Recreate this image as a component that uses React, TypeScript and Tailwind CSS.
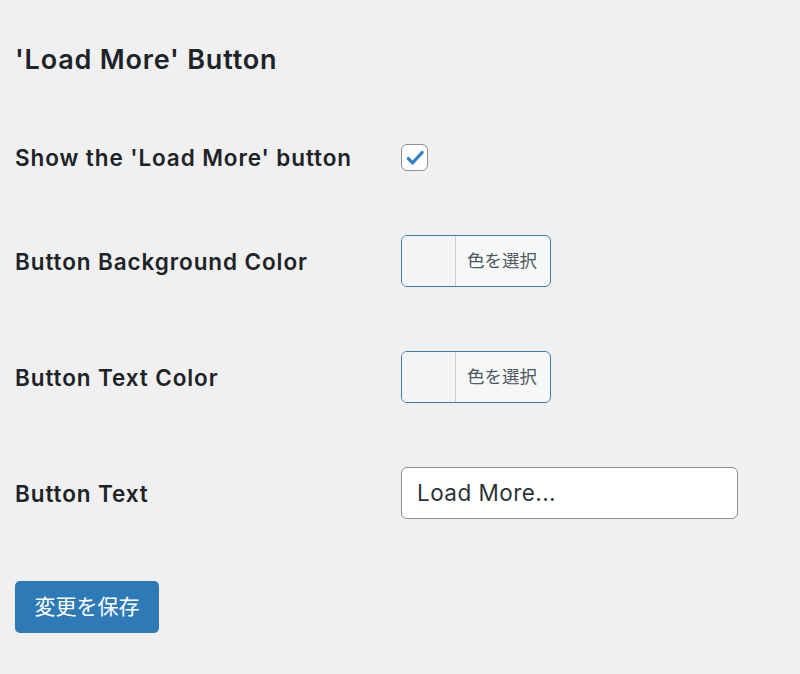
import React from 'react';

const font = { fontFamily: 'Inter, "Noto Sans CJK JP", sans-serif' };

function ColorPicker() {
    return (
        <button
            type="button"
            className="flex h-[52px] w-[150px] overflow-hidden rounded-[6px] border-[1.5px] border-[#3a7cb3] bg-[#f6f7f7]"
        >
            <span className="h-full w-[54px] border-r-[1.5px] border-[#c9cbce] bg-[#f3f4f6]" />
            <span className="flex flex-1 items-center pl-[11px] text-[17.5px] text-[#50575e]">色を選択</span>
        </button>
    );
}

function Row({ label, tall = true, children }: { label: string; tall?: boolean; children: React.ReactNode }) {
    return (
        <div className={tall ? 'flex h-[52px] items-center' : 'flex h-[27px] items-center'}>
            <div className="w-[386px] text-[22.5px] font-semibold leading-[27px] tracking-[0.04em] text-[#1d2327]">{label}</div>
            {children}
        </div>
    );
}

export default function App() {
    return (
        <div className="min-h-[674px] bg-[#f0f0f1] pl-[15px] pt-[44px]" style={font}>
            <h2 className="text-[27px] font-semibold leading-[32px] tracking-[0.03em] text-[#1d2327]">'Load More' Button</h2>

            <div className="mt-[68px] flex flex-col gap-[64px]">
                <Row label="Show the 'Load More' button" tall={false}>
                    <span className="flex h-[27px] w-[27px] items-center justify-center rounded-[6px] border-[1.5px] border-[#8c8f94] bg-white">
                        <svg viewBox="0 0 20 20" className="h-[22px] w-[22px]">
                            <path d="M4 10.5l3.8 4L16.5 5" fill="none" stroke="#3582c4" strokeWidth="3" strokeLinecap="round" strokeLinejoin="round" />
                        </svg>
                    </span>
                </Row>
                <Row label="Button Background Color">
                    <ColorPicker />
                </Row>
                <Row label="Button Text Color">
                    <ColorPicker />
                </Row>
                <Row label="Button Text">
                    <div className="flex h-[52px] w-[337px] items-center rounded-[6px] border-[1.5px] border-[#8c8f94] bg-white pl-[15px] text-[22.5px] tracking-[0.02em] text-[#2c3338]">
                        Load More...
                    </div>
                </Row>
            </div>

            <button
                type="button"
                className="mt-[62px] flex h-[52px] w-[144px] items-center justify-center rounded-[5px] bg-[#2e7ab7] text-[21px] text-white"
            >
                変更を保存
            </button>
        </div>
    );
}
